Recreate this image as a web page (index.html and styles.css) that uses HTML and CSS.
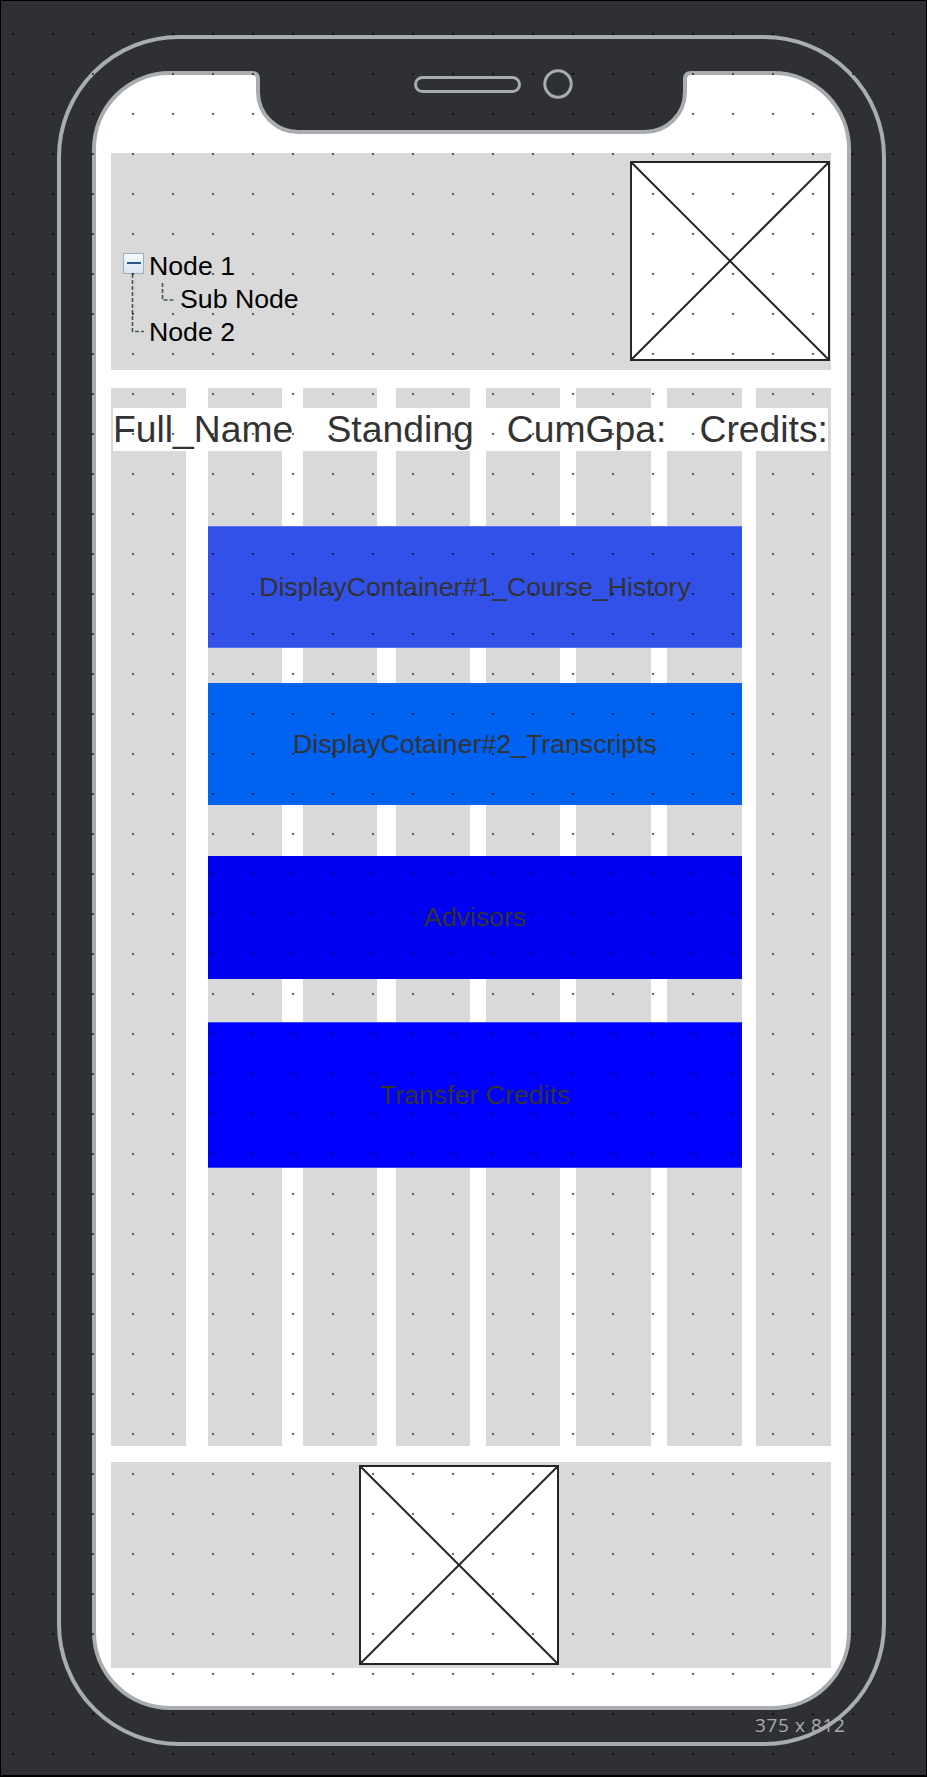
FILE: index.html
```html
<!DOCTYPE html>
<html lang="en">
<head>
<meta charset="utf-8">
<title>Student Profile Wireframe</title>
<link rel="stylesheet" href="styles.css">
</head>
<body>
<div class="page">
  <div class="phone">
    <div class="screen">
      <svg class="notch" width="465" height="71" viewBox="0 0 465 71">
        <path class="notch-fill" d="M0,0 H465 V4 H451 Q445,4 445,10 V23 A40,40 0 0 1 405,63 H58 A40,40 0 0 1 18,23 V10 Q18,4 12,4 H0 Z"/>
        <path class="notch-line" d="M0,4 H12 Q18,4 18,10 V23 A40,40 0 0 0 58,63 H405 A40,40 0 0 0 445,23 V10 Q445,4 451,4 H465"/>
        <rect class="notch-line" x="175.5" y="8.5" width="104" height="14" rx="7"/>
        <circle class="notch-line" cx="318" cy="15" r="13.2"/>
      </svg>

      <section class="panel header-panel">
        <div class="tree">
          <svg class="tree-lines" width="60" height="95" viewBox="0 0 60 95">
            <path d="M12.5,24 V81.5 H24"/>
            <path d="M42.5,33 V50 H54"/>
          </svg>
          <ul class="tree-list">
            <li class="node node-root"><span class="toggle"></span><span class="label">Node 1</span></li>
            <li class="node node-sub"><span class="label">Sub Node</span></li>
            <li class="node node-second"><span class="label">Node 2</span></li>
          </ul>
        </div>
        <div class="placeholder">
          <svg viewBox="0 0 100 100" preserveAspectRatio="none"><line x1="0" y1="0" x2="100" y2="100"/><line x1="100" y1="0" x2="0" y2="100"/></svg>
        </div>
      </section>

      <section class="body-area">
        <div class="cols">
          <div class="col"></div><div class="col"></div><div class="col"></div><div class="col"></div>
          <div class="col"></div><div class="col"></div><div class="col"></div><div class="col"></div>
        </div>
        <div class="content">
          <div class="fields">
            <span>Full_Name</span><span>Standing</span><span>CumGpa:</span><span>Credits:</span>
          </div>
          <div class="box box-history">DisplayContainer#1_Course_History</div>
          <div class="box box-transcripts">DisplayCotainer#2_Transcripts</div>
          <div class="box box-advisors">Advisors</div>
          <div class="box box-transfer">Transfer Credits</div>
        </div>
      </section>

      <section class="panel footer-panel">
        <div class="placeholder">
          <svg viewBox="0 0 100 100" preserveAspectRatio="none"><line x1="0" y1="0" x2="100" y2="100"/><line x1="100" y1="0" x2="0" y2="100"/></svg>
        </div>
      </section>
    </div>
  </div>
  <div class="size-label">375 x 812</div>
  <div class="dots"></div>
</div>
</body>
</html>
```

FILE: styles.css
```css
* { box-sizing: border-box; }

html, body {
  margin: 0;
  padding: 0;
  background: #000;
}

body {
  font-family: "Liberation Sans", Arial, sans-serif;
}

.page {
  position: relative;
  width: 927px;
  height: 1777px;
  background: #2f3034;
  border: 1px solid #000;
  border-bottom-width: 2px;
  overflow: hidden;
}

.phone {
  width: 829px;
  height: 1711px;
  margin: 34px 0 0 56px;
  border: 4px solid #a9adb0;
  border-radius: 122px;
  padding: 32px 31px;
}

.screen {
  position: relative;
  height: 1639px;
  background: #fff;
  border: 4px solid #a9adb0;
  border-radius: 78px;
  padding: 78px 16px 0 15px;
}

.notch {
  position: absolute;
  left: 144px;
  top: -6px;
  display: block;
}
.notch-fill { fill: #2f3034; }
.notch-line { fill: none; stroke: #a9adb0; stroke-width: 4; }
.notch rect.notch-line, .notch circle.notch-line { stroke-width: 3; }

.panel {
  background: #d9d9d9;
}

.header-panel {
  display: flex;
  justify-content: space-between;
  align-items: flex-start;
  height: 217px;
  padding: 8px 1px 9px 9px;
}

.tree {
  display: grid;
  margin-top: 89px;
}
.tree > * { grid-area: 1 / 1; }

.tree-lines {
  display: block;
}
.tree-lines path {
  fill: none;
  stroke: #3d5a5a;
  stroke-width: 1.6;
  stroke-dasharray: 4 2;
}

.tree-list {
  list-style: none;
  margin: 0;
  padding: 0;
  font-size: 26.7px;
  line-height: 33px;
  color: #000;
}

.node {
  display: flex;
  align-items: flex-start;
  height: 33px;
}
.node-root { padding-left: 3px; }
.node-sub { padding-left: 60px; }
.node-second { padding-left: 29px; }

.toggle {
  position: relative;
  width: 21px;
  height: 21px;
  margin-top: 3px;
  margin-right: 5px;
  border: 1.5px solid #9cadc6;
  background: linear-gradient(#f6f9fc, #dbe4f0);
}
.toggle::after {
  content: "";
  position: absolute;
  left: 2.5px;
  right: 2.5px;
  top: 7.5px;
  height: 2.5px;
  background: #24598a;
}

.placeholder {
  width: 200px;
  height: 200px;
  background: #fff;
  border: 2px solid #262626;
}
.placeholder svg {
  display: block;
  width: 100%;
  height: 100%;
}
.placeholder line {
  stroke: #262626;
  stroke-width: 2;
  vector-effect: non-scaling-stroke;
}

.body-area {
  display: grid;
  height: 1058px;
  margin-top: 18px;
}
.body-area > * { grid-area: 1 / 1; }

.cols {
  display: flex;
  height: 100%;
}
.col {
  width: 74px;
  background: #d9d9d9;
}
.col:nth-child(1) { width: 75px; }
.col:nth-child(2) { margin-left: 22px; }
.col:nth-child(3) { margin-left: 21px; }
.col:nth-child(4) { margin-left: 19px; }
.col:nth-child(5) { margin-left: 16px; }
.col:nth-child(6) { margin-left: 16px; width: 75px; }
.col:nth-child(7) { margin-left: 16px; width: 75px; }
.col:nth-child(8) { margin-left: 14px; width: 75px; }

.content {
  display: flex;
  flex-direction: column;
}

.fields {
  display: flex;
  justify-content: space-between;
  height: 43px;
  margin: 20px 3px 0 2px;
  background: #fff;
  font-size: 37.3px;
  line-height: 43px;
  color: #333;
  white-space: nowrap;
}

.box {
  display: flex;
  align-items: center;
  justify-content: center;
  width: 534px;
  margin-left: 97px;
  font-size: 26.7px;
  color: #333;
  white-space: nowrap;
}
.box-history {
  height: 122px;
  margin-top: 75px;
  background: #3251e8;
  border-top: 1px solid #5a73ee;
  border-bottom: 1px solid #5a73ee;
}
.box-transcripts {
  height: 122px;
  margin-top: 35px;
  background: #0062f0;
}
.box-advisors {
  height: 123px;
  margin-top: 51px;
  background: #0000f2;
}
.box-transfer {
  height: 146px;
  margin-top: 43px;
  background: #0000ff;
  border-top: 1px solid #3a4cf0;
  border-bottom: 1px solid #3a4cf0;
}

.footer-panel {
  height: 206px;
  margin-top: 16px;
  padding: 3px 0 0 248px;
}

.size-label {
  position: absolute;
  left: 754px;
  top: 1715px;
  font-family: "Open Sans", "Liberation Sans", sans-serif;
  font-weight: 400;
  font-size: 19px;
  line-height: 19px;
  letter-spacing: 0.6px;
  color: #a9adb0;
}

.dots {
  position: absolute;
  inset: 0;
  pointer-events: none;
  background-image: radial-gradient(circle, rgba(0, 0, 0, 0.6) 0.8px, transparent 1.2px);
  background-size: 40px 40px;
  background-position: -8px 13px;
}
```
